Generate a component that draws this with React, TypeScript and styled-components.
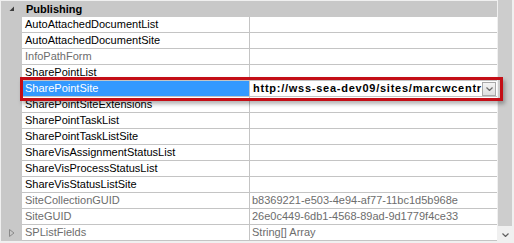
import React from "react";
import styled, { createGlobalStyle } from "styled-components";

const GlobalStyle = createGlobalStyle`
  html, body {
    margin: 0;
    padding: 0;
    background: #f0f0f0;
  }
  body {
    font-family: "Liberation Sans", Arial, sans-serif;
    font-size: 11px;
  }
`;

const Frame = styled.div`
  position: relative;
  display: flex;
  width: 514px;
  height: 243px;
  overflow: hidden;
  background: #f0f0f0;
`;

const Grid = styled.div`
  display: flex;
  flex-direction: column;
  width: 496px;
  padding: 1px 0 0 1px;
`;

const CategoryRow = styled.div`
  display: flex;
  align-items: center;
  height: 16px;
  background: #c8c8c8;
  font-weight: bold;
  color: #000;
`;

const GutterIcon = styled.div`
  display: flex;
  align-items: center;
  justify-content: center;
  width: 21px;
  height: 100%;
  flex-shrink: 0;
`;

const CategoryTitle = styled.div`
  padding-left: 4px;
  line-height: 16px;
`;

const Row = styled.div`
  display: flex;
  height: 16px;
`;

const Gutter = styled.div`
  width: 21px;
  flex-shrink: 0;
  background: #c8c8c8;
  display: flex;
  align-items: center;
  justify-content: center;
`;

const Cells = styled.div`
  display: flex;
  flex: 1;
  min-width: 0;
  background: #fff;
  border-bottom: 1px solid #c4c4c4;
`;

const NameCell = styled.div<{ $muted?: boolean; $selected?: boolean }>`
  flex: 0 0 224px;
  padding-left: 3px;
  line-height: 15px;
  white-space: nowrap;
  overflow: hidden;
  color: ${(p) => (p.$selected ? "#fff" : p.$muted ? "#6d6d6d" : "#000")};
  background: ${(p) => (p.$selected ? "#3399ff" : "transparent")};
  border-right: 1px solid #c4c4c4;
`;

const ValueCell = styled.div<{ $bold?: boolean }>`
  display: flex;
  align-items: center;
  flex: 1 1 0;
  min-width: 0;
  overflow: hidden;
  padding-left: ${(p) => (p.$bold ? "3px" : "2px")};
  line-height: 15px;
  color: ${(p) => (p.$bold ? "#000" : "#6d6d6d")};
  font-weight: ${(p) => (p.$bold ? "bold" : "normal")};
  letter-spacing: ${(p) => (p.$bold ? "0.75px" : "normal")};
`;

const ValueText = styled.div`
  flex: 1 1 0;
  min-width: 0;
  white-space: nowrap;
  overflow: hidden;
`;

const DropButton = styled.div`
  flex: 0 0 14px;
  height: 14px;
  box-sizing: border-box;
  margin-right: 1px;
  display: flex;
  align-items: center;
  justify-content: center;
  border: 1px solid #a9a9a9;
  background: linear-gradient(#f4f4f4, #dedede);
`;

const ScrollBar = styled.div`
  display: flex;
  flex-direction: column;
  width: 14px;
  padding: 0 2px 0 1px;
`;

const Thumb = styled.div`
  flex: 1;
  background: #cdcdcd;
`;

const ArrowButton = styled.div`
  height: 17px;
  display: flex;
  align-items: center;
  justify-content: center;
`;

const Highlight = styled.div`
  position: absolute;
  left: 20px;
  top: 77px;
  width: 483px;
  height: 24px;
  box-sizing: border-box;
  border: 3px solid #c40e16;
  box-shadow: 2px 3px 4px rgba(0, 0, 0, 0.3);
  pointer-events: none;
`;

type Prop = {
  name: string;
  value?: string;
  muted?: boolean;
  selected?: boolean;
  expandable?: boolean;
};

const props: Prop[] = [
  { name: "AutoAttachedDocumentList" },
  { name: "AutoAttachedDocumentSite" },
  { name: "InfoPathForm", muted: true },
  { name: "SharePointList" },
  {
    name: "SharePointSite",
    value: "http://wss-sea-dev09/sites/marcwcentral",
    selected: true,
  },
  { name: "SharePointSiteExtensions" },
  { name: "SharePointTaskList" },
  { name: "SharePointTaskListSite" },
  { name: "ShareVisAssignmentStatusList" },
  { name: "ShareVisProcessStatusList" },
  { name: "ShareVisStatusListSite" },
  {
    name: "SiteCollectionGUID",
    value: "b8369221-e503-4e94-af77-11bc1d5b968e",
    muted: true,
  },
  { name: "SiteGUID", value: "26e0c449-6db1-4568-89ad-9d1779f4ce33", muted: true },
  { name: "SPListFields", value: "String[] Array", muted: true, expandable: true },
];

const Chevron = ({ color }: { color: string }) => (
  <svg width="7" height="4" viewBox="0 0 7 4">
    <path d="M0.5 0.5 L3.5 3.5 L6.5 0.5" fill="none" stroke={color} strokeWidth="1.2" />
  </svg>
);

export default function App() {
  return (
    <Frame>
      <GlobalStyle />
      <Grid>
        <CategoryRow>
          <GutterIcon>
            <svg width="6" height="6" viewBox="0 0 6 6">
              <polygon points="5,0.5 5,5 0.5,5" fill="#3c3c3c" />
            </svg>
          </GutterIcon>
          <CategoryTitle>Publishing</CategoryTitle>
        </CategoryRow>
        {props.map((p) => (
          <Row key={p.name}>
            <Gutter>
              {p.expandable && (
                <svg width="6" height="8" viewBox="0 0 6 8">
                  <polygon points="0.5,0.5 5,4 0.5,7.5" fill="none" stroke="#8a8a8a" strokeWidth="1" />
                </svg>
              )}
            </Gutter>
            <Cells>
              <NameCell $muted={p.muted} $selected={p.selected}>
                {p.name}
              </NameCell>
              <ValueCell $bold={p.selected}>
                <ValueText>{p.value}</ValueText>
                {p.selected && (
                  <DropButton>
                    <Chevron color="#6a6a6a" />
                  </DropButton>
                )}
              </ValueCell>
            </Cells>
          </Row>
        ))}
      </Grid>
      <ScrollBar>
        <Thumb />
        <ArrowButton>
          <Chevron color="#606060" />
        </ArrowButton>
      </ScrollBar>
      <Highlight />
    </Frame>
  );
}
